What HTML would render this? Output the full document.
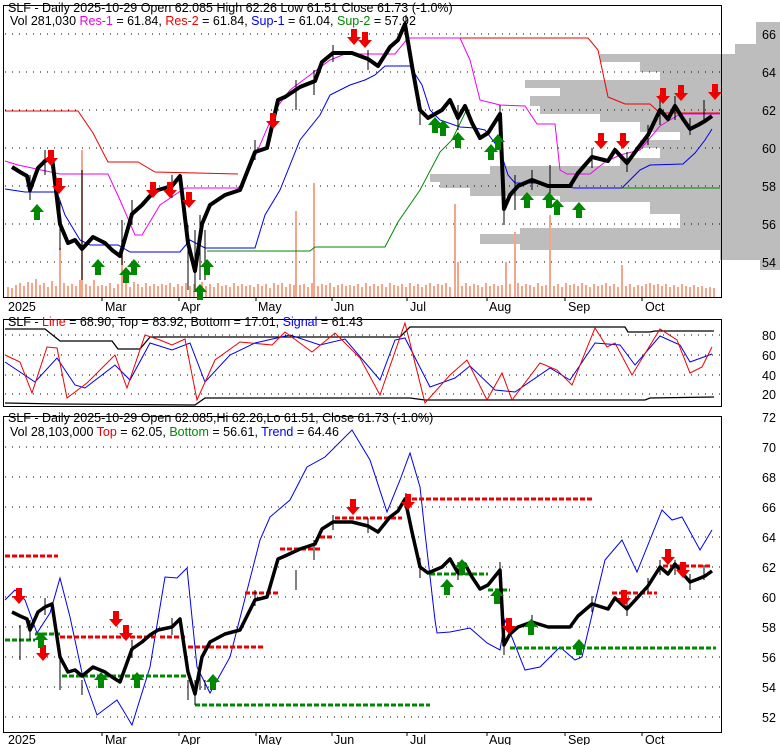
<!DOCTYPE html>
<html><head><meta charset="utf-8"><style>
html,body{margin:0;padding:0;background:#fff;}
svg{display:block;font-family:"Liberation Sans",Arial,sans-serif;}
</style></head><body>
<svg width="780" height="745" viewBox="0 0 780 745" xmlns="http://www.w3.org/2000/svg">
<rect width="780" height="745" fill="#fff"/>
<g fill="#bdbdbd">
<rect x="756" y="22" width="24" height="22"/>
<rect x="735" y="44" width="45" height="10"/>
<rect x="600" y="54" width="180" height="8"/>
<rect x="640" y="62" width="140" height="10"/>
<rect x="660" y="72" width="120" height="8"/>
<rect x="525" y="80" width="255" height="8"/>
<rect x="560" y="88" width="220" height="8"/>
<rect x="530" y="96" width="250" height="10"/>
<rect x="540" y="106" width="240" height="8"/>
<rect x="600" y="114" width="180" height="8"/>
<rect x="640" y="122" width="140" height="10"/>
<rect x="680" y="132" width="100" height="8"/>
<rect x="640" y="140" width="140" height="8"/>
<rect x="660" y="148" width="120" height="10"/>
<rect x="620" y="158" width="160" height="8"/>
<rect x="490" y="166" width="290" height="8"/>
<rect x="430" y="174" width="350" height="8"/>
<rect x="440" y="182" width="340" height="6"/>
<rect x="470" y="188" width="310" height="8"/>
<rect x="560" y="196" width="220" height="6"/>
<rect x="650" y="202" width="130" height="12"/>
<rect x="680" y="214" width="100" height="14"/>
<rect x="520" y="228" width="260" height="6"/>
<rect x="480" y="234" width="300" height="10"/>
<rect x="520" y="244" width="260" height="6"/>
<rect x="720" y="250" width="60" height="10"/>
<rect x="760" y="260" width="20" height="10"/>
</g>
<rect x="3.5" y="5.5" width="718" height="292" fill="none" stroke="#000"/>
<rect x="3.5" y="319.5" width="718" height="87" fill="none" stroke="#000"/>
<rect x="3.5" y="416.5" width="718" height="316" fill="none" stroke="#000"/>
<g stroke="#000" stroke-dasharray="1,6" stroke-width="1">
<line x1="5" y1="34" x2="720" y2="34"/><line x1="5" y1="72" x2="720" y2="72"/><line x1="5" y1="110" x2="720" y2="110"/><line x1="5" y1="148" x2="720" y2="148"/><line x1="5" y1="186" x2="720" y2="186"/><line x1="5" y1="224" x2="720" y2="224"/><line x1="5" y1="262" x2="720" y2="262"/>
<line x1="5" y1="335" x2="720" y2="335"/><line x1="5" y1="355" x2="720" y2="355"/><line x1="5" y1="375" x2="720" y2="375"/><line x1="5" y1="394" x2="720" y2="394"/>
<line x1="5" y1="447" x2="720" y2="447"/><line x1="5" y1="477" x2="720" y2="477"/><line x1="5" y1="507" x2="720" y2="507"/><line x1="5" y1="537" x2="720" y2="537"/><line x1="5" y1="567" x2="720" y2="567"/><line x1="5" y1="597" x2="720" y2="597"/><line x1="5" y1="627" x2="720" y2="627"/><line x1="5" y1="657" x2="720" y2="657"/><line x1="5" y1="687" x2="720" y2="687"/><line x1="5" y1="717" x2="720" y2="717"/>
</g>
<g stroke="#f4a58a" stroke-width="2">
<path d="M8 297V287M12 297V288M16 297V285M20 297V283M24 297V286M28 297V282M32 297V283M36 297V279M40 297V285M44 297V283M48 297V287M52 297V281M56 297V286M60 297V248M64 297V283M68 297V286M72 297V284M76 297V286M80 297V280M82 297V150M86 297V284M90 297V286M94 297V280M98 297V286M102 297V285M106 297V286M110 297V283M114 297V288M118 297V284M122 297V240M126 297V283M130 297V287M134 297V282M138 297V284M142 297V287M146 297V283M150 297V286M154 297V284M158 297V286M162 297V284M166 297V285M170 297V283M174 297V287M178 297V284M182 297V286M186 297V283M190 297V286M194 297V284M198 297V287M202 297V282M206 297V286M210 297V284M214 297V287M218 297V283M222 297V286M226 297V285M230 297V287M234 297V283M238 297V286M242 297V284M246 297V286M250 297V285M254 297V287M258 297V284M262 297V286M266 297V284M270 297V288M274 297V283M278 297V285M282 297V283M286 297V287M290 297V284M294 297V285M296 297V211M300 297V285M304 297V284M308 297V287M312 297V283M314 297V183M318 297V286M322 297V284M326 297V285M330 297V283M334 297V287M338 297V285M342 297V284M346 297V286M350 297V285M354 297V286M358 297V284M362 297V287M366 297V283M370 297V286M374 297V284M378 297V286M382 297V284M386 297V287M390 297V283M394 297V285M398 297V286M402 297V284M406 297V287M410 297V283M414 297V286M418 297V284M422 297V287M426 297V285M430 297V283M434 297V286M438 297V284M442 297V285M446 297V283M450 297V287M455 297V204M458 297V262M462 297V286M466 297V283M470 297V286M474 297V284M478 297V285M482 297V287M486 297V283M490 297V286M494 297V284M498 297V286M502 297V285M506 297V262M510 297V284M515 297V232M518 297V283M522 297V286M526 297V284M530 297V285M534 297V287M538 297V283M542 297V286M546 297V285M550 297V215M554 297V286M558 297V284M562 297V287M566 297V283M570 297V285M574 297V284M578 297V286M582 297V283M586 297V285M590 297V287M594 297V284M598 297V286M602 297V285M606 297V283M610 297V286M614 297V284M618 297V287M622 297V265M626 297V286M630 297V284M634 297V287M638 297V285M642 297V286M646 297V284M650 297V283M654 297V285M658 297V284M662 297V286M666 297V284M670 297V287M674 297V285M678 297V287M682 297V284M686 297V286M690 297V287M694 297V285M698 297V287M702 297V286M706 297V288M710 297V287M714 297V288"/>
</g>
<polyline fill="none" stroke="#e00" stroke-width="1" points="5,111 78,111 93,133 108,162 138,162 155,172 238,174"/>
<polyline fill="none" stroke="#e00" stroke-width="1" points="410,38 588,38 598,50 608,97 625,104 650,104 660,113 720,113"/>
<polyline fill="none" stroke="#e0e" stroke-width="1" points="5,161 18,165 60,174 108,174 120,200 135,235 142,235 160,205 185,188 238,188 245,180 275,110 290,90 310,75 330,60 345,54 395,54 408,38 460,38 470,60 480,100 500,105 525,106 537,124 555,124 560,170 567,174 590,174 605,162 620,155 640,150 660,126 680,114 720,114"/>
<polyline fill="none" stroke="#00e" stroke-width="1" points="5,189 25,192 57,192 65,215 80,240 90,245 118,245 130,252 180,252 190,240 205,248 255,248 265,215 280,190 300,140 320,115 330,95 350,85 365,80 375,75 385,66 410,66 422,85 430,110 440,120 460,127 475,128 485,130 500,150 508,175 515,183 535,183 550,185 575,188 622,188 640,170 650,165 683,164 695,153 705,140 712,129"/>
<polyline fill="none" stroke="#080" stroke-width="1" points="207,251 310,251 315,247 385,247 398,222 420,190 440,152 452,140 466,111 470,110"/>
<line x1="622" y1="188" x2="720" y2="188" stroke="#080"/>
<g fill="none" stroke="#000" stroke-linejoin="round">
<polyline stroke-width="4" points="12,167 20,172 27,176 30,190 38,168 45,161 52,157 60,224 68,243 75,240 82,249 93,237 105,243 112,250 120,256 132,214 142,205 150,196 158,190 172,186 180,176 188,243 195,271 202,224 210,205 225,195 240,190 255,152 267,148 278,100 285,97 300,87 315,81 322,62 333,53 352,53 368,59 378,66 390,47 398,40 405,24 412,66 420,110 428,118 442,110 450,100 458,118 465,106 472,123 480,138 488,133 500,114 504,209 510,195 518,186 532,180 548,186 562,186 570,186 578,173 592,157 608,161 615,150 627,163 638,148 648,135 660,110 668,119 675,106 683,119 690,129 698,125 705,121 712,116"/>
<path stroke-width="1" d="M60 200V250M82 170V280M122 220V265M188 225V290M195 230V292M200 215V280M205 230V280M296 80V110M314 70V95M406 15V40M504 190V225M515 175V210M550 165V195M660 95V125M675 96V120M704 100V120M30 175V200M45 150V175M132 200V225M172 175V198M255 140V160M333 45V62M368 50V70M420 100V125M458 105V130M500 105V125M532 170V190M592 148V168M627 152V172M648 125V145M690 118V135"/>
</g>
<g fill="#e00">
<path d="M48 150h6v8h4l-7 8-7-8h4z"/><path d="M56 178h6v8h4l-7 8-7-8h4z"/>
<path d="M150 182h6v8h4l-7 8-7-8h4z"/><path d="M167 182h6v8h4l-7 8-7-8h4z"/><path d="M186 192h6v8h4l-7 8-7-8h4z"/>
<path d="M270 113h6v8h4l-7 8-7-8h4z"/><path d="M351 29h6v8h4l-7 8-7-8h4z"/><path d="M362 32h6v8h4l-7 8-7-8h4z"/>
<path d="M598 133h6v8h4l-7 8-7-8h4z"/><path d="M620 133h6v8h4l-7 8-7-8h4z"/>
<path d="M660 88h6v8h4l-7 8-7-8h4z"/><path d="M678 85h6v8h4l-7 8-7-8h4z"/><path d="M712 84h6v8h4l-7 8-7-8h4z"/>
</g>
<g fill="#080">
<path d="M34 220h6v-8h4l-7-8-7 8h4z"/><path d="M95 275h6v-8h4l-7-8-7 8h4z"/><path d="M123 283h6v-8h4l-7-8-7 8h4z"/><path d="M131 275h6v-8h4l-7-8-7 8h4z"/>
<path d="M197 300h6v-8h4l-7-8-7 8h4z"/><path d="M204 275h6v-8h4l-7-8-7 8h4z"/>
<path d="M432 133h6v-8h4l-7-8-7 8h4z"/><path d="M440 136h6v-8h4l-7-8-7 8h4z"/><path d="M455 148h6v-8h4l-7-8-7 8h4z"/>
<path d="M488 160h6v-8h4l-7-8-7 8h4z"/><path d="M495 150h6v-8h4l-7-8-7 8h4z"/>
<path d="M524 208h6v-8h4l-7-8-7 8h4z"/><path d="M546 208h6v-8h4l-7-8-7 8h4z"/><path d="M554 215h6v-8h4l-7-8-7 8h4z"/><path d="M576 218h6v-8h4l-7-8-7 8h4z"/>
</g>
<text x="8" y="12" font-size="12.5">SLF - Daily 2025-10-29 Open 62.085  High 62.26  Low 61.51  Close 61.73 (-1.0%)</text>
<text x="10" y="25" font-size="12.5">Vol 281,030 <tspan fill="#e0e">Res-1</tspan> = 61.84, <tspan fill="#e00">Res-2</tspan> = 61.84, <tspan fill="#00e">Sup-1</tspan> = 61.04, <tspan fill="#080">Sup-2</tspan> = 57.92</text>
<g font-size="12.5">
<text x="762" y="39">66</text><text x="762" y="77">64</text><text x="762" y="115">62</text><text x="762" y="153">60</text><text x="762" y="191">58</text><text x="762" y="229">56</text><text x="762" y="267">54</text>
</g>
<g stroke="#000"><path d="M102 297v4M179 297v4M256 297v4M332 297v4M407 297v4M487 297v4M565 297v4M642 297v4"/></g>
<g font-size="12.5">
<text x="8" y="311">2025</text><text x="105" y="311">Mar</text><text x="181" y="311">Apr</text><text x="258" y="311">May</text><text x="334" y="311">Jun</text><text x="410" y="311">Jul</text><text x="489" y="311">Aug</text><text x="568" y="311">Sep</text><text x="645" y="311">Oct</text>
</g>
<rect x="5" y="320" width="352" height="13" fill="#fff"/>
<text x="8" y="326" font-size="12.5">SLF - <tspan fill="#e00">Line</tspan> = 68.90, Top = 83.92, Bottom = 17.01, <tspan fill="#00e">Signal</tspan> = 61.43</text>
<polyline fill="none" stroke="#000" stroke-width="1.3" points="5,329 45,329 60,341 112,341 118,349 140,349 150,337 400,337 410,327 625,327 628,332 650,332 655,331 714,331"/>
<polyline fill="none" stroke="#000" stroke-width="1.3" points="5,403 60,404 195,405 205,398 410,398 425,400 645,400 650,398 714,397"/>
<polyline fill="none" stroke="#00e" stroke-width="1" points="5,362 35,382 57,358 75,385 85,388 115,365 130,380 150,343 172,350 190,343 205,382 230,355 255,343 290,335 320,345 345,339 380,380 395,340 405,338 430,387 455,378 470,366 495,390 515,392 550,368 570,380 595,343 620,345 635,365 660,336 680,345 690,362 712,354"/>
<polyline fill="none" stroke="#e00" stroke-width="1" points="5,355 20,362 32,393 47,347 57,348 67,398 87,383 115,355 127,388 145,335 160,340 172,345 185,339 197,400 215,360 240,342 272,345 285,332 312,352 335,333 360,358 380,395 405,323 425,403 450,375 467,360 487,400 502,373 512,400 540,363 557,370 572,385 595,328 607,347 615,343 632,375 660,329 677,340 690,373 702,367 712,347"/>
<g font-size="12.5">
<text x="762" y="340">80</text><text x="762" y="360">60</text><text x="762" y="380">40</text><text x="762" y="399">20</text>
</g>
<rect x="5" y="417" width="424" height="13" fill="#fff"/>
<text x="8" y="422" font-size="12.5">SLF - Daily 2025-10-29 Open 62.085,Hi 62.26,Lo 61.51, Close 61.73 (-1.0%)</text>
<text x="10" y="436" font-size="12.5">Vol 28,103,000 <tspan fill="#e00">Top</tspan> = 62.05, <tspan fill="#080">Bottom</tspan> = 56.61, <tspan fill="#00e">Trend</tspan> = 64.46</text>
<polyline fill="none" stroke="#00e" stroke-width="1" points="5,600 15,590 25,600 37,633 50,613 60,578 70,617 82,673 97,715 117,700 132,725 150,667 165,577 177,578 187,568 197,667 210,693 230,657 260,540 270,517 290,500 307,467 325,457 352,430 370,460 387,512 400,480 410,453 420,487 425,533 435,620 437,633 450,632 470,628 487,643 500,650 505,620 525,670 540,667 560,647 575,660 582,657 605,560 622,540 637,572 662,510 672,520 682,517 700,550 712,530"/>
<g fill="none" stroke-width="3" stroke-dasharray="5,2">
<g stroke="#e00"><path d="M5 556H58M60 637H155M188 647H263M280 549H320M320 537H333M335 518H402M405 499H592M612 593H657M663 566H710M245 593H278M160 637H185"/></g>
<g stroke="#080"><path d="M5 640H35M35 634H60M62 676H190M195 705H430M430 574H488M488 590H510M510 648H716"/></g>
</g>
<g fill="none" stroke="#000" stroke-linejoin="round">
<polyline stroke-width="3.5" points="12,612 20,616 27,619 30,630 38,612 45,607 52,604 60,657 68,672 75,670 82,676 93,667 105,672 112,677 120,682 132,649 142,642 150,635 158,630 172,627 180,619 188,672 195,694 202,657 210,642 225,634 240,630 255,600 267,597 278,559 285,556 300,549 315,544 322,529 333,522 352,522 368,526 378,532 390,517 398,511 405,499 412,532 420,567 428,573 442,567 450,559 458,573 465,564 472,577 480,589 488,585 500,570 504,645 510,634 518,627 532,622 548,627 562,627 570,627 578,616 592,604 608,609 615,598 627,609 638,597 648,586 660,567 668,574 675,564 683,574 690,582 698,579 705,576 712,571"/>
<path stroke-width="1" d="M20 625V660M60 690V660M82 680V695M188 680V700M195 680V705M200 660V690M205 680V690M296 570V590M314 540V560M406 493V510M504 640V655M660 560V575M675 560V575M704 565V580M30 620V640M45 598V615M132 640V658M172 618V635M255 590V606M333 515V530M368 518V533M420 558V578M458 562V580M500 562V578M532 615V630M592 596V612M627 600V616M648 578V592M690 574V590"/>
</g>
<g fill="#e00">
<path d="M16 588h6v8h4l-7 8-7-8h4z"/><path d="M40 645h6v8h4l-7 8-7-8h4z"/><path d="M113 611h6v8h4l-7 8-7-8h4z"/><path d="M123 625h6v8h4l-7 8-7-8h4z"/>
<path d="M350 499h6v8h4l-7 8-7-8h4z"/><path d="M405 494h6v8h4l-7 8-7-8h4z"/><path d="M506 618h6v8h4l-7 8-7-8h4z"/>
<path d="M621 590h6v8h4l-7 8-7-8h4z"/><path d="M665 549h6v8h4l-7 8-7-8h4z"/><path d="M680 562h6v8h4l-7 8-7-8h4z"/>
</g>
<g fill="#080">
<path d="M38 648h6v-8h4l-7-8-7 8h4z"/><path d="M98 688h6v-8h4l-7-8-7 8h4z"/><path d="M134 688h6v-8h4l-7-8-7 8h4z"/>
<path d="M210 690h6v-8h4l-7-8-7 8h4z"/><path d="M444 595h6v-8h4l-7-8-7 8h4z"/><path d="M459 575h6v-8h4l-7-8-7 8h4z"/>
<path d="M494 604h6v-8h4l-7-8-7 8h4z"/><path d="M528 635h6v-8h4l-7-8-7 8h4z"/><path d="M576 655h6v-8h4l-7-8-7 8h4z"/>
</g>
<g font-size="12.5">
<text x="762" y="422">72</text><text x="762" y="452">70</text><text x="762" y="482">68</text><text x="762" y="512">66</text><text x="762" y="542">64</text><text x="762" y="572">62</text><text x="762" y="602">60</text><text x="762" y="632">58</text><text x="762" y="662">56</text><text x="762" y="692">54</text><text x="762" y="722">52</text>
</g>
<g stroke="#000"><path d="M102 732v4M179 732v4M256 732v4M332 732v4M407 732v4M487 732v4M565 732v4M642 732v4"/></g>
<g font-size="12.5">
<text x="8" y="744">2025</text><text x="105" y="744">Mar</text><text x="181" y="744">Apr</text><text x="258" y="744">May</text><text x="334" y="744">Jun</text><text x="410" y="744">Jul</text><text x="489" y="744">Aug</text><text x="568" y="744">Sep</text><text x="645" y="744">Oct</text>
</g>
</svg>
</body></html>
